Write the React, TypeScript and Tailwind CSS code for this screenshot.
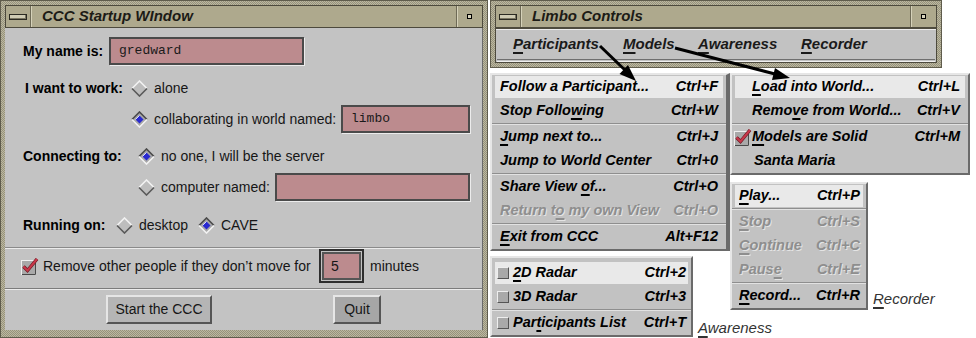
import React from 'react';

const sans = "font-['Liberation_Sans',Arial,sans-serif]";
const frame =
  'bg-[image:repeating-conic-gradient(#bcb8a0_0_25%,#96927c_0_50%)] bg-[length:2px_2px] border border-[#5f5c4c]';

function TitleBar({ title }: { title: string }) {
  return (
    <div className="flex h-[23px] shrink-0 border border-[#4d4a3d] bg-[#aea98d]">
      <div className="flex w-[25px] items-center justify-center border-r border-r-[#6e6a56] shadow-[1px_0_0_#d6d2ba]">
        <div className="h-[6px] w-[18px] border border-[#2b2a22] bg-[#cfcbb3] shadow-[inset_-1px_-1px_0_#7a7662]" />
      </div>
      <div className="flex flex-1 items-center pl-[11px] text-[15px] font-bold italic text-[#1c1b16]">{title}</div>
      <div className="flex w-[26px] items-center justify-center border-l border-l-[#6e6a56] shadow-[inset_1px_0_0_#d6d2ba]">
        <div className="h-[5px] w-[5px] border border-black bg-[#d8d4bc]" />
      </div>
    </div>
  );
}

function Diamond({ on }: { on?: boolean }) {
  return (
    <svg width="17" height="17" viewBox="0 0 17 17" className="shrink-0">
      <polygon points="8.5,1 16,8.5 8.5,16 1,8.5" fill={on ? '#a8a8a8' : '#bdbdbd'} />
      <polyline points="1,8.5 8.5,1 16,8.5" fill="none" stroke={on ? '#4a4a4a' : '#f2f2f2'} strokeWidth="1.6" />
      <polyline points="1,8.5 8.5,16 16,8.5" fill="none" stroke={on ? '#f2f2f2' : '#5a5a5a'} strokeWidth="1.6" />
      {on && <polygon points="8.5,4.5 12.5,8.5 8.5,12.5 4.5,8.5" fill="#2a2ad0" />}
      {on && <polyline points="4.5,8.5 8.5,4.5" stroke="#d8d8ff" strokeWidth="1" />}
    </svg>
  );
}

function RedCheck() {
  return (
    <svg width="19" height="19" viewBox="0 0 19 19" className="shrink-0">
      <rect x="1.5" y="3.5" width="14" height="14" fill="#a9a9a9" stroke="#f0f0f0" />
      <path d="M2 17.5 H15.5 V4" fill="none" stroke="#4a4a4a" />
      <path d="M3.5 9.5 L7.5 13.5 L17 2" fill="none" stroke="#6e1a24" strokeWidth="3.4" />
      <path d="M3.5 9.5 L7.5 13.5 L17 2" fill="none" stroke="#c8384a" strokeWidth="2" />
    </svg>
  );
}

function Field({ w, text }: { w: string; text?: string }) {
  return (
    <div
      className={`${w} flex h-[28px] shrink-0 items-center border-2 border-[#4a4a4a] bg-[#bc8b8e] pl-[8px] shadow-[1px_1px_0_#ececec] font-['Liberation_Mono',monospace] text-[13px] text-[#1a1a1a]`}
    >
      {text}
    </div>
  );
}

function StartupWindow() {
  return (
    <div className={`flex h-[338px] w-[488px] shrink-0 flex-col px-[4px] pb-[7px] pt-[4px] ${frame}`}>
      <TitleBar title="CCC Startup WIndow" />
      <div className="flex flex-1 flex-col border-r border-r-[#6a6a6a] bg-[#c3c3c3] text-[14px] text-[#161616]">
        <div className="flex flex-col border-b border-b-[#7c7c7c] pb-[5px] shadow-[0_1px_0_#ececec]">
          <div className="mt-[9px] flex h-[28px] items-center pl-[18px]">
            <span className="w-[86px] font-bold text-black">My name is:</span>
            <Field w="w-[195px]" text="gredward" />
          </div>
          <div className="mt-[11px] flex h-[24px] items-center pl-[20px]">
            <span className="w-[106px] font-bold text-black">I want to work:</span>
            <Diamond />
            <span className="ml-[6px]">alone</span>
          </div>
          <div className="mt-[5px] flex h-[28px] items-center pl-[126px]">
            <Diamond on />
            <span className="ml-[6px] w-[187px]">collaborating in world named:</span>
            <Field w="w-[129px]" text="limbo" />
          </div>
          <div className="mt-[11px] flex h-[24px] items-center pl-[18px]">
            <span className="w-[115px] font-bold text-black">Connecting to:</span>
            <Diamond on />
            <span className="ml-[6px]">no one, I will be the server</span>
          </div>
          <div className="mt-[5px] flex h-[28px] items-center pl-[133px]">
            <Diamond />
            <span className="ml-[6px] w-[114px]">computer named:</span>
            <Field w="w-[195px]" />
          </div>
          <div className="mt-[12px] flex h-[24px] items-center pl-[18px]">
            <span className="w-[93px] font-bold text-black">Running on:</span>
            <Diamond />
            <span className="ml-[6px] w-[59px]">desktop</span>
            <Diamond on />
            <span className="ml-[6px]">CAVE</span>
          </div>
          <div className="mr-[2px] mt-[10px] h-[2px] border-t border-t-[#8a8a8a] border-b border-b-[#ebebeb]" />
          <div className="flex h-[34px] items-center pl-[15px]">
            <RedCheck />
            <span className="ml-[4px] w-[276px]">Remove other people if they don’t move for</span>
            <div className="flex h-[34px] w-[45px] shrink-0 border-2 border-[#2e2e2e] p-[1px]">
              <div className="flex flex-1 items-center border-2 border-[#555] bg-[#bc8b8e] pl-[7px]">5</div>
            </div>
            <span className="ml-[6px]">minutes</span>
          </div>
        </div>
        <div className="flex flex-1 items-start pt-[6px]">
          <button className="ml-[101px] h-[29px] w-[106px] border-2 border-[#e6e6e6] border-b-[#555] border-r-[#555] bg-[#b5b5b5] text-[14px] text-[#161616]">
            Start the CCC
          </button>
          <button className="ml-[121px] h-[29px] w-[48px] border-2 border-[#e6e6e6] border-b-[#555] border-r-[#555] bg-[#a6a6a6] text-[14px] text-[#161616]">
            Quit
          </button>
        </div>
      </div>
    </div>
  );
}

function U({ children }: { children: React.ReactNode }) {
  return <span className="underline decoration-[2px] underline-offset-[3px]">{children}</span>;
}

function Item({
  label,
  keys,
  hl,
  off,
  lead,
  pl = 'pl-[5px]',
  pr = 'pr-[5px]',
}: {
  label: React.ReactNode;
  keys?: string;
  hl?: boolean;
  off?: boolean;
  lead?: React.ReactNode;
  pl?: string;
  pr?: string;
}) {
  return (
    <div className="h-[24px] px-[3px] py-[1px]">
      <div
        className={`flex h-full items-center justify-between whitespace-nowrap ${pl} ${pr} ${hl ? 'bg-[#e9e9e9]' : ''} ${
          off ? 'text-[#8e8e8e] [text-shadow:1px_1px_0_#e4e4e4]' : 'text-black'
        }`}
      >
        <span className="flex items-center">
          {lead}
          <span>{label}</span>
        </span>
        {keys && <span className="ml-[6px]">{keys}</span>}
      </div>
    </div>
  );
}

function Sep() {
  return <div className="h-[2px] border-t border-t-[#8e8e8e] border-b border-b-[#e2e2e2]" />;
}

const menu = `flex flex-col border-2 border-[#e6e6e6] border-b-[#6a6a6a] border-r-[#6a6a6a] bg-[#c2c2c2] text-[14.5px] font-bold italic`;

function Toggle() {
  return <span className="mr-[4px] h-[12px] w-[12px] shrink-0 border border-[#eeeeee] border-b-[#555] border-r-[#555] bg-[#a9a9a9]" />;
}

function LimboWindow() {
  return (
    <div className={`flex h-[68px] w-[452px] flex-col px-[4px] pb-[4px] pt-[4px] ${frame}`}>
      <TitleBar title="Limbo Controls" />
      <div className="flex flex-1 flex-col border border-[#4d4a3d] bg-[#c2c2c2]">
        <div className="flex h-[28px] items-center pl-[17px] pt-[2px] text-[15px] font-bold italic text-[#1a1a1a] shadow-[inset_0_1px_0_#ececec]">
          <span className="w-[110px]">
            <U>P</U>articipants
          </span>
          <span className="w-[75px]">
            <U>M</U>odels
          </span>
          <span className="w-[103px]">
            <U>A</U>wareness
          </span>
          <span>
            <U>R</U>ecorder
          </span>
        </div>
        <div className="mx-[1px] mt-[2px] h-[3px] border-t border-t-[#6f6f6f] border-b border-b-[#f0f0f0]" />
      </div>
    </div>
  );
}

export default function App() {
  return (
    <div className={`relative flex h-[338px] w-[976px] overflow-hidden bg-white ${sans}`}>
      <StartupWindow />
      <div className="flex flex-col pl-[2px]">
        <LimboWindow />
        <div className="mt-[5px] flex">
          <div className="flex w-[240px] flex-col">
            <div className={`${menu} border-r-[4px] border-r-[#3a3a3a]`}>
              <Item label="Follow a Participant..." keys="Ctrl+F" hl />
              <Item label={<>Stop Follo<U>w</U>ing</>} keys="Ctrl+W" />
              <Sep />
              <Item label={<><U>J</U>ump next to...</>} keys="Ctrl+J" />
              <Item label="Jump to World Center" keys="Ctrl+0" />
              <Sep />
              <Item label={<>Share View <U>o</U>f...</>} keys="Ctrl+O" />
              <Item label={<>Return t<U>o</U> my own View</>} keys="Ctrl+O" off />
              <Sep />
              <Item label={<><U>E</U>xit from CCC</>} keys="Alt+F12" />
            </div>
            <div className="mt-[5px] flex items-end">
              <div className={`${menu} w-[203px] shrink-0 pt-[3px]`}>
                <Item lead={<Toggle />} pl="pl-[2px]" pr="pr-[2px]" label={<><U>2</U>D Radar</>} keys="Ctrl+2" hl />
                <Item lead={<Toggle />} pl="pl-[2px]" pr="pr-[2px]" label="3D Radar" keys="Ctrl+3" />
                <Sep />
                <Item lead={<Toggle />} pl="pl-[2px]" pr="pr-[2px]" label={<>Par<U>t</U>icipants List</>} keys="Ctrl+T" />
              </div>
              <span className="mb-[-2px] ml-[5px] whitespace-nowrap text-[15px] italic text-[#333]">
                <U>A</U>wareness
              </span>
            </div>
          </div>
          <div className="flex flex-col">
            <div className={`${menu} w-[240px]`}>
              <Item pl="pl-[17px]" pr="pr-[5px]" label={<><U>L</U>oad into World...</>} keys="Ctrl+L" hl />
              <Item pl="pl-[17px]" label={<>Remo<U>v</U>e from World...</>} keys="Ctrl+V" />
              <Sep />
              <div className="flex h-[24px] items-center justify-between pl-[1px] pr-[8px] text-black">
                <span className="flex items-center">
                  <RedCheck />
                  <span>
                    <U>M</U>odels are Solid
                  </span>
                </span>
                <span>Ctrl+M</span>
              </div>
              <Item pl="pl-[19px]" label="Santa Maria" />
            </div>
            <div className="mt-[7px] flex items-end">
              <div className={`${menu} w-[138px] shrink-0`}>
                <Item pl="pl-[4px]" pr="pr-[3px]" label={<><U>P</U>lay...</>} keys="Ctrl+P" hl />
                <Sep />
                <Item pl="pl-[4px]" pr="pr-[3px]" label={<><U>S</U>top</>} keys="Ctrl+S" off />
                <Item pl="pl-[4px]" pr="pr-[3px]" label={<><U>C</U>ontinue</>} keys="Ctrl+C" off />
                <Item pl="pl-[4px]" pr="pr-[3px]" label={<>Paus<U>e</U></>} keys="Ctrl+E" off />
                <Sep />
                <Item pl="pl-[4px]" pr="pr-[3px]" label={<><U>R</U>ecord...</>} keys="Ctrl+R" />
              </div>
              <span className="mb-[0px] ml-[5px] whitespace-nowrap text-[15px] italic text-[#333]">
                <U>R</U>ecorder
              </span>
            </div>
          </div>
        </div>
      </div>
      <svg className="pointer-events-none absolute left-0 top-0" width="976" height="338">
        <line x1="600" y1="46" x2="626" y2="71" stroke="#000" strokeWidth="3" />
        <polygon points="636,81 619.5,74 628,65" fill="#000" />
        <line x1="675" y1="48" x2="775" y2="74" stroke="#000" strokeWidth="3" />
        <polygon points="790,78 772,80 775,68" fill="#000" />
      </svg>
    </div>
  );
}
